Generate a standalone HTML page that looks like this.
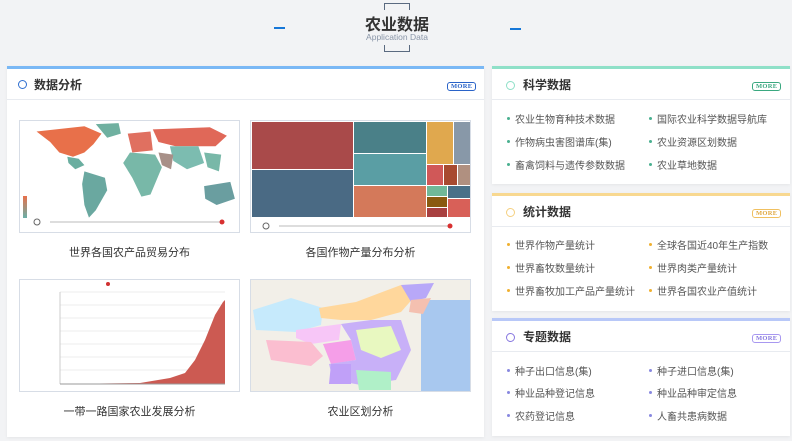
<!DOCTYPE html>
<html><head><meta charset="utf-8"><style>
*{margin:0;padding:0;box-sizing:border-box}
body{width:792px;height:441px;background:#f2f3f5;font-family:"Liberation Sans","Noto Sans CJK SC",sans-serif;position:relative;overflow:hidden;color:#333}
.abs{position:absolute}
.panel{position:absolute;background:#fff;box-shadow:0 1px 3px rgba(0,0,0,.06)}
.hd{position:absolute;left:0;right:0;top:3px;height:31px;border-bottom:1px solid #e8ebf0}
.circ{position:absolute;width:9px;height:9px;border-radius:50%;border:1.5px solid}
.ttl{position:absolute;font-size:12px;font-weight:bold;color:#333;top:7px}
.more{position:absolute;font-family:"Liberation Serif",serif;font-size:6.5px;font-weight:bold;border:1px solid;border-radius:3px;padding:0 3px;line-height:7px;letter-spacing:.3px}
.li{position:absolute;font-size:10px;color:#555;white-space:nowrap}
.li:before{content:"";position:absolute;left:-8px;top:6px;width:3px;height:3px;border-radius:50%;background:var(--c)}
.card{position:absolute;border:1px solid #d7dde6;background:#fff;overflow:hidden}
.cap{position:absolute;font-size:11px;color:#333;width:221px;text-align:center}
</style></head><body>
<div class="abs" style="left:274px;top:27px;width:11px;height:2px;background:#1677d8"></div>
<div class="abs" style="left:510px;top:28px;width:11px;height:2px;background:#1677d8"></div>
<div class="abs" style="left:384px;top:3px;width:26px;height:7px;border:1.5px solid #5a6a80;border-bottom:none"></div>
<div class="abs" style="left:384px;top:45px;width:26px;height:7px;border:1.5px solid #5a6a80;border-top:none"></div>
<div class="abs" style="left:350px;top:11px;width:94px;text-align:center;font-size:16px;font-weight:bold;color:#333">农业数据</div>
<div class="abs" style="left:340px;top:32px;width:114px;text-align:center;font-size:8.5px;color:#8a96a8">Application Data</div>

<div class="panel" style="left:7px;top:66px;width:477px;height:371px;border-top:3px solid #7ab8f5">
 <div class="hd" style="top:0"><div class="circ" style="left:11px;top:11px;border-color:#2f6fd0"></div><div class="ttl" style="left:27px">数据分析</div><div class="more" style="left:440px;top:13px;color:#2a63c8;border-color:#2a63c8">MORE</div></div>
</div>
<div class="card" style="left:19px;top:120px;width:221px;height:113px">
<svg width="221" height="113">
<g transform="translate(-4,0) scale(1.14,1.05)">
<path d="M18 10 L60 5 L75 12 L68 22 L60 30 L50 34 L38 30 L30 20 Z" fill="#e8704a"/>
<path d="M70 3 L90 2 L92 12 L80 16Z" fill="#6fb0a0"/>
<path d="M45 34 L55 36 L60 42 L52 46 L46 40Z" fill="#6aaea0"/>
<path d="M60 48 L78 54 L80 66 L70 85 L64 92 L60 80 L58 60Z" fill="#6aa8a0"/>
<path d="M98 12 L118 10 L120 28 L102 30Z" fill="#e07060"/>
<path d="M100 30 L122 32 L128 44 L118 70 L110 72 L102 54 L94 40Z" fill="#78b8a8"/>
<path d="M120 8 L170 6 L185 14 L175 24 L140 24 L125 20Z" fill="#e06858"/>
<path d="M135 24 L160 24 L165 40 L150 46 L138 38Z" fill="#7cbcb0"/>
<path d="M125 30 L138 32 L136 46 L128 42Z" fill="#a89088"/>
<path d="M165 30 L180 32 L178 48 L168 44Z" fill="#78b8a8"/>
<path d="M165 62 L188 58 L192 74 L176 80 L166 74Z" fill="#6a9ea0"/>
</g>
<rect x="3" y="75" width="4" height="22" fill="url(#g)"/>
<defs><linearGradient id="g" x1="0" y1="0" x2="0" y2="1"><stop offset="0" stop-color="#e8704a"/><stop offset="1" stop-color="#6ab0a8"/></linearGradient></defs>
<circle cx="17" cy="101" r="3" fill="none" stroke="#666"/>
<line x1="30" y1="101" x2="200" y2="101" stroke="#bbb"/>
<circle cx="202" cy="101" r="2.5" fill="#d83030"/>
</svg></div>
<div class="cap" style="left:19px;top:244px">世界各国农产品贸易分布</div>
<div class="card" style="left:250px;top:120px;width:221px;height:113px">
<svg width="221" height="113">
<rect x="1" y="1" width="101" height="47" fill="#a94a4a"/>
<rect x="1" y="49" width="101" height="47" fill="#4a6a84"/>
<rect x="103" y="1" width="72" height="31" fill="#4a8088"/>
<rect x="103" y="33" width="72" height="31" fill="#5a9ea4"/>
<rect x="103" y="65" width="72" height="31" fill="#d4795a"/>
<rect x="176" y="1" width="26" height="42" fill="#e0a84e"/>
<rect x="203" y="1" width="17" height="42" fill="#8898a8"/>
<rect x="176" y="44" width="16" height="20" fill="#d05858"/>
<rect x="193" y="44" width="13" height="20" fill="#a84a30"/>
<rect x="207" y="44" width="13" height="20" fill="#b09080"/>
<rect x="176" y="65" width="20" height="10" fill="#70b898"/>
<rect x="176" y="76" width="20" height="10" fill="#8a5a10"/>
<rect x="176" y="87" width="20" height="9" fill="#a84040"/>
<rect x="197" y="65" width="23" height="12" fill="#4a7088"/>
<rect x="197" y="78" width="23" height="18" fill="#d86058"/>
<circle cx="15" cy="105" r="3" fill="none" stroke="#666"/>
<line x1="28" y1="105" x2="200" y2="105" stroke="#bbb"/>
<circle cx="199" cy="105" r="2.5" fill="#d83030"/>
</svg></div>
<div class="cap" style="left:250px;top:244px">各国作物产量分布分析</div>
<div class="card" style="left:19px;top:279px;width:221px;height:113px">
<svg width="221" height="113">
<g stroke="#eee"><line x1="40" y1="12" x2="205" y2="12"/><line x1="40" y1="25" x2="205" y2="25"/><line x1="40" y1="38" x2="205" y2="38"/><line x1="40" y1="51" x2="205" y2="51"/><line x1="40" y1="64" x2="205" y2="64"/><line x1="40" y1="77" x2="205" y2="77"/><line x1="40" y1="90" x2="205" y2="90"/></g>
<line x1="40" y1="12" x2="40" y2="104" stroke="#ccc"/>
<path d="M40 104 L120 103 L150 98 L165 93 L175 80 L185 60 L195 35 L203 22 L205 20 L205 104Z" fill="#cc5a52"/>
<line x1="40" y1="104" x2="205" y2="104" stroke="#999"/>
<circle cx="88" cy="4" r="2" fill="#d03030"/>
</svg></div>
<div class="cap" style="left:19px;top:403px">一带一路国家农业发展分析</div>
<div class="card" style="left:250px;top:279px;width:221px;height:113px;background:#f2efe8">
<svg width="221" height="113">
<rect x="170" y="20" width="51" height="93" fill="#a8c8ef"/>
<path d="M2 30 L40 18 L72 28 L70 45 L45 52 L5 50Z" fill="#c6eafc"/>
<path d="M68 28 L105 22 L150 5 L165 15 L150 32 L120 40 L90 40 L70 38Z" fill="#ffd79c"/>
<path d="M150 5 L183 3 L175 18 L160 22Z" fill="#b8a8f8"/>
<path d="M160 20 L180 18 L172 34 L158 32Z" fill="#f4c0b0"/>
<path d="M45 50 L90 44 L88 60 L60 64 L45 58Z" fill="#f7c6f7"/>
<path d="M15 60 L60 62 L72 76 L60 86 L20 80Z" fill="#fbbed0"/>
<path d="M72 64 L100 60 L105 80 L80 84Z" fill="#f59ee8"/>
<path d="M90 44 L120 40 L150 40 L160 70 L145 100 L110 105 L82 100 L78 84 L105 80 L100 60Z" fill="#c8b0f8"/>
<path d="M105 50 L140 46 L150 70 L130 78 L110 70Z" fill="#e8f8c0"/>
<path d="M80 84 L100 84 L100 104 L78 104Z" fill="#c0a0f8"/>
<path d="M105 90 L140 92 L140 110 L108 110Z" fill="#b0f0c8"/>
</svg></div>
<div class="cap" style="left:250px;top:403px">农业区划分析</div>

<div class="panel" style="left:492px;top:66px;width:298px;height:118px;border-top:3px solid #8fe0c8">
 <div class="hd" style="top:0"><div class="circ" style="left:14px;top:12px;border-color:#8fe0c8"></div><div class="ttl" style="left:31px">科学数据</div><div class="more" style="left:260px;top:13px;color:#3aa880;border-color:#3aa880">MORE</div></div>
</div>
<div style="--c:#4ab090">
<div class="li" style="left:515px;top:111px">农业生物育种技术数据</div>
<div class="li" style="left:657px;top:111px">国际农业科学数据导航库</div>
<div class="li" style="left:515px;top:134px">作物病虫害图谱库(集)</div>
<div class="li" style="left:657px;top:134px">农业资源区划数据</div>
<div class="li" style="left:515px;top:157px">畜禽饲料与遗传参数数据</div>
<div class="li" style="left:657px;top:157px">农业草地数据</div>
</div>
<div class="panel" style="left:492px;top:193px;width:298px;height:118px;border-top:3px solid #f8d890">
 <div class="hd" style="top:0"><div class="circ" style="left:14px;top:12px;border-color:#f5d080"></div><div class="ttl" style="left:31px">统计数据</div><div class="more" style="left:260px;top:13px;color:#e0a840;border-color:#f0c060">MORE</div></div>
</div>
<div style="--c:#f0b030">
<div class="li" style="left:515px;top:237px">世界作物产量统计</div>
<div class="li" style="left:657px;top:237px">全球各国近40年生产指数</div>
<div class="li" style="left:515px;top:260px">世界畜牧数量统计</div>
<div class="li" style="left:657px;top:260px">世界肉类产量统计</div>
<div class="li" style="left:515px;top:283px">世界畜牧加工产品产量统计</div>
<div class="li" style="left:657px;top:283px">世界各国农业产值统计</div>
</div>
<div class="panel" style="left:492px;top:318px;width:298px;height:118px;border-top:3px solid #b8c8f8">
 <div class="hd" style="top:0"><div class="circ" style="left:14px;top:12px;border-color:#8878e0"></div><div class="ttl" style="left:31px">专题数据</div><div class="more" style="left:260px;top:13px;color:#8878e0;border-color:#a898f0">MORE</div></div>
</div>
<div style="--c:#8888e0">
<div class="li" style="left:515px;top:363px">种子出口信息(集)</div>
<div class="li" style="left:657px;top:363px">种子进口信息(集)</div>
<div class="li" style="left:515px;top:385px">种业品种登记信息</div>
<div class="li" style="left:657px;top:385px">种业品种审定信息</div>
<div class="li" style="left:515px;top:408px">农药登记信息</div>
<div class="li" style="left:657px;top:408px">人畜共患病数据</div>
</div>
</body></html>
